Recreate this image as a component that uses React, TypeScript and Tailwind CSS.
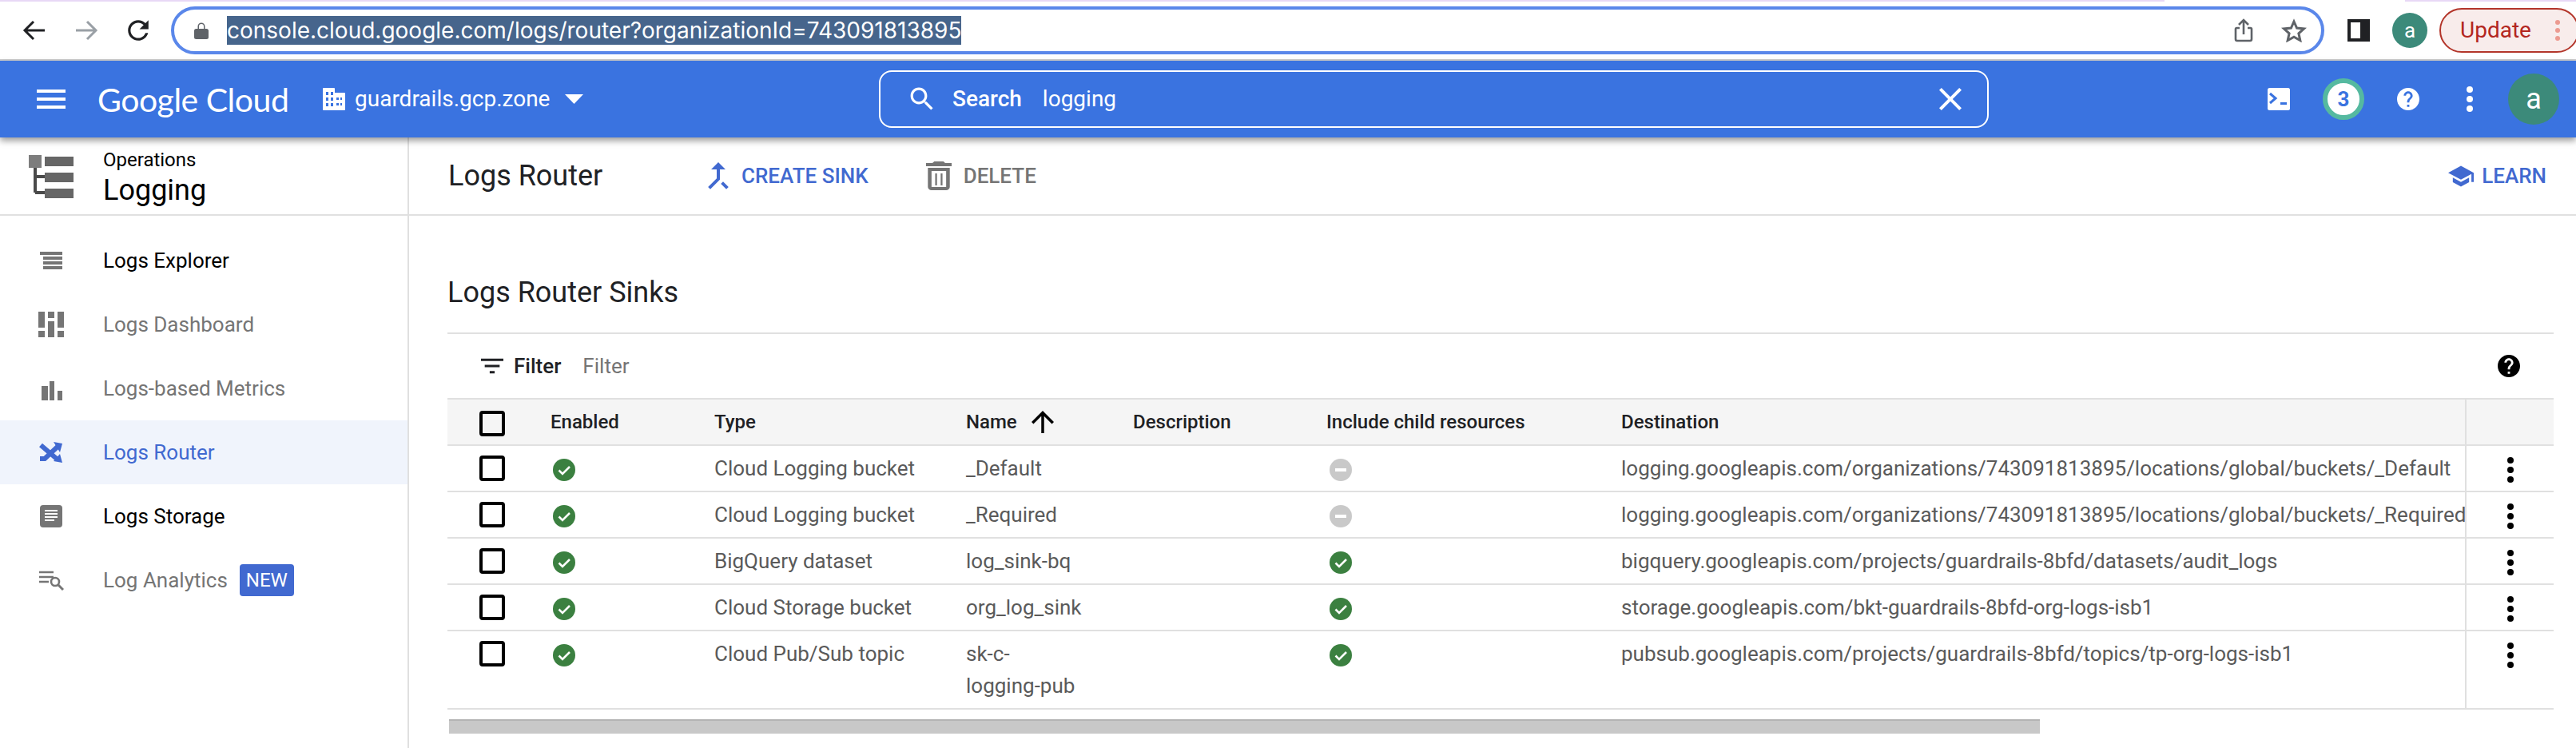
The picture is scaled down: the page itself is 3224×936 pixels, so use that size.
import { FC } from 'react';

const rows = [
  { type: 'Cloud Logging bucket', name: ['_Default'], child: false, dest: 'logging.googleapis.com/organizations/743091813895/locations/global/buckets/_Default' },
  { type: 'Cloud Logging bucket', name: ['_Required'], child: false, dest: 'logging.googleapis.com/organizations/743091813895/locations/global/buckets/_Required' },
  { type: 'BigQuery dataset', name: ['log_sink-bq'], child: true, dest: 'bigquery.googleapis.com/projects/guardrails-8bfd/datasets/audit_logs' },
  { type: 'Cloud Storage bucket', name: ['org_log_sink'], child: true, dest: 'storage.googleapis.com/bkt-guardrails-8bfd-org-logs-isb1' },
  { type: 'Cloud Pub/Sub topic', name: ['sk-c-', 'logging-pub'], child: true, dest: 'pubsub.googleapis.com/projects/guardrails-8bfd/topics/tp-org-logs-isb1' },
];

const gridCols = 'grid grid-cols-[129px_205px_315px_209px_242px_369px_1056px_111px]';

const Checkbox: FC = () => <div className="h-8 w-8 rounded-[4px] border-4 border-black" />;

const CheckCircle: FC = () => (
  <svg width="28" height="28" viewBox="0 0 28 28">
    <circle cx="14" cy="14" r="14" fill="#3b8040" />
    <path d="M7.5 14.5l4.5 4.5 9-9" fill="none" stroke="#fff" strokeWidth="2.6" />
  </svg>
);

const MinusCircle: FC = () => (
  <svg width="28" height="28" viewBox="0 0 28 28">
    <circle cx="14" cy="14" r="14" fill="#c9c9c9" />
    <rect x="7" y="12" width="14" height="4" fill="#fff" />
  </svg>
);

const MoreVert: FC<{ fill?: string }> = ({ fill = '#000' }) => (
  <svg width="8" height="32" viewBox="0 0 8 32" fill={fill}>
    <circle cx="4" cy="4" r="4" />
    <circle cx="4" cy="16" r="4" />
    <circle cx="4" cy="28" r="4" />
  </svg>
);

const navItems = [
  {
    label: 'Logs Explorer',
    text: 'text-black',
    icon: (
      <svg width="32" height="32" viewBox="0 0 32 32" fill="#757575">
        <rect x="2" y="5" width="28" height="4" />
        <rect x="6" y="11" width="24" height="4" />
        <rect x="6" y="17" width="24" height="4" />
        <rect x="6" y="23" width="24" height="4" />
      </svg>
    ),
  },
  {
    label: 'Logs Dashboard',
    text: 'text-[#757575]',
    icon: (
      <svg width="32" height="32" viewBox="0 0 32 32" fill="#757575">
        <rect x="0" y="0" width="8" height="20" />
        <rect x="0" y="24" width="8" height="8" />
        <rect x="12" y="0" width="8" height="8" />
        <rect x="12" y="12" width="8" height="20" />
        <rect x="24" y="0" width="8" height="20" />
        <rect x="24" y="24" width="8" height="8" />
      </svg>
    ),
  },
  {
    label: 'Logs-based Metrics',
    text: 'text-[#757575]',
    icon: (
      <svg width="32" height="32" viewBox="0 0 32 32" fill="#757575">
        <rect x="4" y="13" width="8" height="18" />
        <rect x="14" y="7" width="6" height="24" />
        <rect x="24" y="19" width="6" height="12" />
      </svg>
    ),
  },
  {
    label: 'Logs Router',
    text: 'text-[#4169d0]',
    active: true,
    icon: (
      <svg width="32" height="32" viewBox="0 0 32 32" fill="none" stroke="#4169d0" strokeWidth="6">
        <path d="M3 7l21 18" />
        <path d="M2 24h6L24 9" />
        <path d="M19 3l11 2-3 11z" fill="#4169d0" stroke="none" />
        <path d="M30 29l-11-2 8-9z" fill="#4169d0" stroke="none" />
      </svg>
    ),
  },
  {
    label: 'Logs Storage',
    text: 'text-black',
    icon: (
      <svg width="32" height="32" viewBox="0 0 32 32">
        <rect x="2" y="2" width="28" height="28" rx="4" fill="#757575" />
        <path d="M8 9h16M8 13h16M8 17h16M8 21h12" stroke="#fff" strokeWidth="2" />
      </svg>
    ),
  },
  {
    label: 'Log Analytics',
    text: 'text-[#757575]',
    badge: true,
    icon: (
      <svg width="32" height="32" viewBox="0 0 32 32" fill="none" stroke="#757575" strokeWidth="2.6">
        <path d="M1 6h18M1 12h18M1 18h12" />
        <circle cx="21" cy="18" r="5" />
        <path d="M25 22l6 6" strokeWidth="3" />
      </svg>
    ),
  },
];

export default function App() {
  return (
    <div className="h-[936px] w-[3224px] overflow-hidden bg-white font-[Roboto,sans-serif]">
      {/* browser chrome */}
      <div className="h-[76px] border-b-2 border-[#cfcfcf] bg-white">
        <div className="flex h-[2px]">
          <div className="w-[2709px] bg-[#e8d8f6]" />
          <div className="w-[301px]" />
          <div className="flex-1 bg-[#e8d8f6]" />
        </div>
        <div className="flex h-[72px] items-center pl-[27px]">
          <svg className="shrink-0" width="32" height="32" viewBox="0 0 32 32" fill="none" stroke="#202124" strokeWidth="3">
            <path d="M29 16H5M15 5L4 16l11 11" />
          </svg>
          <svg className="ml-[33px] shrink-0" width="32" height="32" viewBox="0 0 32 32" fill="none" stroke="#9aa0a6" strokeWidth="3">
            <path d="M3 16h24M17 5l11 11-11 11" />
          </svg>
          <svg className="ml-[33px] shrink-0" width="32" height="32" viewBox="2 2 20 20" fill="#202124">
            <path d="M17.65 6.35C16.2 4.9 14.21 4 12 4c-4.42 0-7.99 3.58-7.99 8s3.57 8 7.99 8c3.73 0 6.84-2.55 7.73-6h-2.08c-.82 2.33-3.04 4-5.65 4-3.31 0-6-2.69-6-6s2.69-6 6-6c1.66 0 3.14.69 4.22 1.78L13 11h7V4l-2.35 2.35z" />
          </svg>
          <div className="ml-[25px] flex h-[60px] w-[2695px] shrink-0 items-center rounded-[30px] border-4 border-[#5a87ea] pl-[25px]">
            <svg width="18" height="24" viewBox="0 0 18 24" fill="#5f6368">
              <path d="M4.5 10V7a4.5 4.5 0 0 1 9 0v3H12V7a3 3 0 0 0-6 0v3z" />
              <rect x="0" y="10" width="18" height="13" rx="2.5" />
            </svg>
            <span className="ml-[23px] h-[36px] bg-[#46658c] font-[Inter,sans-serif] text-[28px] leading-[36px] whitespace-nowrap text-white">
              console.cloud.google.com/logs/router?organizationId=743091813895
            </span>
            <svg className="ml-auto" width="24" height="30" viewBox="0 0 24 30" fill="none" stroke="#5f6368" strokeWidth="2.6">
              <path d="M12 20V3M6 8l6-6 6 6M7 12H3.5A1.5 1.5 0 0 0 2 13.500V26a2 2 0 0 0 2 2h16a2 2 0 0 0 2-2V13.500A1.500 1.500 0 0 0 20.500 12H17" />
            </svg>
            <svg className="mr-[18px] ml-[35px]" width="32" height="30" viewBox="0 0 32 30" fill="none" stroke="#5f6368" strokeWidth="3">
              <path d="M16 4l3.600 8 8.900.900-6.600 5.900 1.900 8.700L16 23.100l-7.800 4.400 1.900-8.700-6.600-5.900 8.900-.900z" />
            </svg>
          </div>
          <div className="ml-[29px] flex h-[28px] w-[28px] shrink-0 justify-start border-4 border-[#202124] bg-[#202124]">
            <div className="h-full w-[12px] bg-white" />
          </div>
          <div className="ml-[28px] flex h-[44px] w-[44px] shrink-0 items-center justify-center rounded-full bg-[#3c8a7a] text-[26px] text-white">a</div>
          <div className="ml-[15px] flex h-[56px] w-[175px] shrink-0 items-center rounded-[28px] border-2 border-[#b3352a] bg-[#f8eceb] pl-[24px]">
            <span className="text-[28px] leading-none text-[#b3261e]">Update</span>
            <svg className="ml-[30px]" width="6" height="26" viewBox="0 0 6 26" fill="#ec9a90">
              <circle cx="3" cy="3" r="3" />
              <circle cx="3" cy="13" r="3" />
              <circle cx="3" cy="23" r="3" />
            </svg>
          </div>
        </div>
      </div>

      {/* cloud console header */}
      <header className="relative z-10 flex h-[96px] items-center bg-[#3a73e0] shadow-[0_4px_8px_rgba(0,0,0,0.4)]">
        <div className="flex w-[1100px] shrink-0 items-center pl-[46px]">
          <svg width="36" height="24" viewBox="3 6 18 12" fill="#fff">
            <path d="M3 18h18v-2H3v2zm0-5h18v-2H3v2zm0-7v2h18V6H3z" />
          </svg>
          <span className="ml-[40px] w-[282px] font-[Lato,sans-serif] text-[41px] leading-none tracking-[-0.5px] whitespace-nowrap text-white">Google Cloud</span>
          <svg width="28" height="28" viewBox="0 0 28 28" fill="#fff">
            <path fillRule="evenodd" d="M1 0h13a1 1 0 0 1 1 1v5h12a1 1 0 0 1 1 1v20a1 1 0 0 1-1 1H1a1 1 0 0 1-1-1V1a1 1 0 0 1 1-1zm3 5v4h3V5zm6 0v4h3V5zM4 12v4h3v-4zm6 0v4h3v-4zm7 0v3h3v-3zm5 0v3h2v-3zM4 19v4h3v-4zm6 0v4h3v-4zm7 0v3h3v-3zm5 0v3h2v-3z" />
          </svg>
          <span className="ml-[12px] text-[28px] leading-none whitespace-nowrap text-white">guardrails.gcp.zone</span>
          <svg className="ml-[19px]" width="23" height="12" viewBox="0 0 23 12" fill="#fff">
            <path d="M0 0h23L11.500 12z" />
          </svg>
        </div>
        <div className="flex h-[72px] w-[1389px] shrink-0 items-center rounded-[16px] border-2 border-white pl-[36px] text-[28px] text-white">
          <svg width="32" height="32" viewBox="2 2 20 20" fill="#fff">
            <path d="M15.500 14h-.79l-.28-.27C15.410 12.590 16 11.110 16 9.500 16 5.910 13.090 3 9.500 3S3 5.910 3 9.500 5.910 16 9.500 16c1.610 0 3.090-.59 4.230-1.570l.27.280v.79l5 4.990L20.490 19l-4.990-5zm-6 0C7.010 14 5 11.990 5 9.500S7.010 5 9.500 5 14 7.010 14 9.500 11.990 14 9.500 14z" />
          </svg>
          <span className="ml-[22px] font-medium">Search</span>
          <span className="ml-[26px]">logging</span>
          <svg className="mr-[32px] ml-auto" width="28" height="28" viewBox="5 5 14 14" fill="#fff">
            <path d="M19 6.410L17.590 5 12 10.590 6.410 5 5 6.410 10.590 12 5 17.590 6.410 19 12 13.410 17.590 19 19 17.590 13.410 12z" />
          </svg>
        </div>
        <svg className="ml-[349px]" width="28" height="28" viewBox="0 0 28 28">
          <rect width="28" height="28" rx="2.500" fill="#fff" />
          <path d="M3 7l7 6-7 6" fill="none" stroke="#3a73e0" strokeWidth="3" />
          <rect x="16" y="18" width="8" height="3" fill="#3a73e0" />
        </svg>
        <div className="ml-[41px] flex h-[52px] w-[52px] items-center justify-center rounded-full border-[6px] border-[#55b9a0] bg-white text-[26px] leading-none font-bold text-[#3a73e0]">3</div>
        <svg className="ml-[41px]" width="28" height="28" viewBox="2 2 20 20" fill="#fff">
          <path d="M12 2C6.480 2 2 6.480 2 12s4.480 10 10 10 10-4.480 10-10S17.520 2 12 2zm1 17h-2v-2h2v2zm2.070-7.750l-.9.920C13.450 12.900 13 13.500 13 15h-2v-.5c0-1.100.45-2.100 1.170-2.830l1.240-1.260c.37-.36.59-.86.59-1.410 0-1.100-.9-2-2-2s-2 .9-2 2H8c0-2.210 1.790-4 4-4s4 1.790 4 4c0 .88-.36 1.680-.93 2.250z" />
        </svg>
        <div className="ml-[59px]">
          <MoreVert fill="#fff" />
        </div>
        <div className="ml-[44px] flex h-16 w-16 items-center justify-center rounded-full bg-[#3c8a7a] text-[36px] leading-none text-white">a</div>
      </header>

      <div className="flex h-[764px]">
        {/* sidebar */}
        <aside className="w-[512px] shrink-0 border-r-2 border-[#e0e0e0]">
          <div className="flex h-[98px] border-b-2 border-[#e0e0e0]">
            <svg className="mt-[22px] ml-[36px]" width="56" height="54" viewBox="0 0 56 54">
              <path d="M8 16v31M8 27h14M8 47h14" fill="none" stroke="#4a4a4a" strokeWidth="4" />
              <rect x="0" y="0" width="16" height="16" fill="#7d7d7d" />
              <rect x="20" y="2" width="36" height="12" fill="#666" />
              <rect x="20" y="22" width="36" height="12" fill="#666" />
              <rect x="20" y="42" width="36" height="12" fill="#666" />
            </svg>
            <div className="ml-[37px] pt-[12px] text-black">
              <div className="text-[24px] leading-[32px]">Operations</div>
              <div className="text-[36px] leading-[44px]">Logging</div>
            </div>
          </div>
          <nav className="pt-4">
            {navItems.map((item) => (
              <div key={item.label} className={`flex h-20 items-center pl-12 text-[26px] ${item.text} ${item.active ? 'bg-[#f0f4fc]' : ''}`}>
                {item.icon}
                <span className="ml-[49px]">{item.label}</span>
                {item.badge && (
                  <span className="ml-[15px] flex h-10 w-[68px] items-center justify-center rounded-[4px] bg-[#4169d0] text-[24px] text-white">NEW</span>
                )}
              </div>
            ))}
          </nav>
        </aside>

        {/* main */}
        <main className="min-w-0 flex-1">
          <div className="flex h-[98px] items-center border-b-2 border-[#e0e0e0] pr-[37px] pl-[49px] text-[26px] font-medium">
            <h1 className="w-[324px] text-[36px] font-normal whitespace-nowrap text-[#202124]">Logs Router</h1>
            <svg width="28" height="36" viewBox="5 3 14 18" fill="#4169d0">
              <path d="M17 20.410L18.410 19 15 15.590 13.590 17 17 20.410zM7.500 8H11v5.590L5.590 19 7 20.410l6-6V8h3.500L12 3.500 7.500 8z" />
            </svg>
            <span className="ml-[15px] text-[#4169d0]">CREATE SINK</span>
            <svg className="ml-[72px]" width="32" height="36" viewBox="5 3 14 18" preserveAspectRatio="none" fill="#757575">
              <path d="M16 9v10H8V9h8m-1.500-6h-5l-1 1H5v2h14V4h-3.500l-1-1zM18 7H6v12c0 1.100.9 2 2 2h8c1.100 0 2-.9 2-2V7z" />
              <path d="M10 10.500h1V18h-1zM13 10.500h1V18h-1z" />
            </svg>
            <span className="ml-[15px] text-[#757575]">DELETE</span>
            <svg className="ml-auto" width="32" height="27" viewBox="1 3 22 18" fill="#4169d0">
              <path d="M5 13.180v4L12 21l7-3.820v-4L12 17l-7-3.820zM12 3L1 9l11 6 9-4.910V17h2V9L12 3z" />
            </svg>
            <span className="ml-[10px] text-[#4169d0]">LEARN</span>
          </div>

          <div className="pr-[28px] pl-[48px]">
            <h2 className="border-b-2 border-[#e0e0e0] pt-[76px] pb-[30px] text-[36px] leading-[40px] text-[#202124]">Logs Router Sinks</h2>

            <div className="flex h-20 items-center pr-[42px] pl-[42px] text-[26px]">
              <svg width="28" height="20" viewBox="3 6 18 12" fill="#202124">
                <path d="M10 18h4v-2h-4v2zM3 6v2h18V6H3zm3 7h12v-2H6v2z" />
              </svg>
              <span className="ml-[13px] font-medium text-[#202124]">Filter</span>
              <span className="ml-[27px] text-[#757575]">Filter</span>
              <svg className="ml-auto" width="28" height="28" viewBox="2 2 20 20" fill="#000">
                <path d="M12 2C6.480 2 2 6.480 2 12s4.480 10 10 10 10-4.480 10-10S17.520 2 12 2zm1 17h-2v-2h2v2zm2.070-7.750l-.9.920C13.450 12.900 13 13.500 13 15h-2v-.5c0-1.100.45-2.100 1.170-2.830l1.240-1.260c.37-.36.59-.86.59-1.410 0-1.100-.9-2-2-2s-2 .9-2 2H8c0-2.210 1.790-4 4-4s4 1.790 4 4c0 .88-.36 1.680-.93 2.250z" />
              </svg>
            </div>

            {/* table header */}
            <div className={`${gridCols} h-[60px] border-y-2 border-[#e0e0e0] bg-[#f5f5f5] text-[24px] leading-[56px] font-medium text-[#202124]`}>
              <div className="pt-[14px] pl-[40px]">
                <Checkbox />
              </div>
              <div>Enabled</div>
              <div>Type</div>
              <div className="flex items-center">
                Name
                <svg className="ml-[18px]" width="28" height="28" viewBox="4 4 16 16" fill="#000">
                  <path d="M4 12l1.410 1.410L11 7.830V20h2V7.830l5.580 5.590L20 12l-8-8-8 8z" />
                </svg>
              </div>
              <div>Description</div>
              <div>Include child resources</div>
              <div>Destination</div>
              <div className="border-l-2 border-[#e0e0e0]" />
            </div>

            {/* table rows */}
            {rows.map((row) => (
              <div key={row.dest} className={`${gridCols} border-b-2 border-[#e0e0e0] text-[26px] leading-[40px] text-[#5a5a5a]`}>
                <div className="pt-[12px] pl-[40px]">
                  <Checkbox />
                </div>
                <div className="pt-[16px] pl-[3px]">
                  <CheckCircle />
                </div>
                <div className="py-2">{row.type}</div>
                <div className="py-2">
                  {row.name.map((line) => (
                    <div key={line}>{line}</div>
                  ))}
                </div>
                <div />
                <div className="pt-[16px] pl-[4px]">{row.child ? <CheckCircle /> : <MinusCircle />}</div>
                <div className="py-2 whitespace-nowrap">{row.dest}</div>
                <div className="flex justify-center border-l-2 border-[#e0e0e0] pt-[14px]">
                  <div>
                    <MoreVert />
                  </div>
                </div>
              </div>
            ))}

            <div className="mt-3 ml-[2px] h-[18px] w-[1991px] border-t-2 border-[#b4b4b4] bg-[#c8c8c8]" />
          </div>
        </main>
      </div>
    </div>
  );
}
